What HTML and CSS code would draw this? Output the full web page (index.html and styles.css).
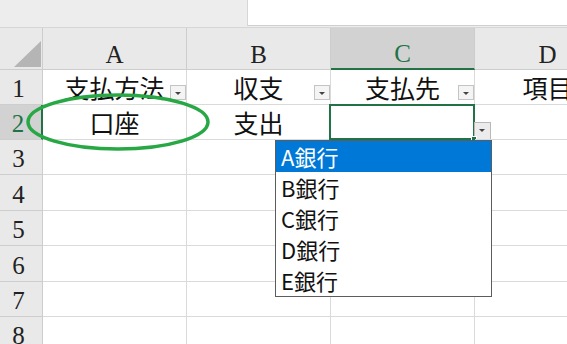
FILE: index.html
```html
<!DOCTYPE html>
<html lang="ja">

<head>
    <meta charset="UTF-8" />
    <title>支払先リスト</title>
    <link rel="stylesheet" href="styles.css">
</head>

<body>
    <div class="topbar">
        <div class="topbar-left"></div>
        <div class="formula-box"></div>
    </div>

    <div class="sheet">
        <div class="grid">
            <div class="corner">
                <svg width="42" height="42" viewBox="0 0 42 42">
                    <polygon points="41,13 41,39 14,39" fill="#b5b5b5" />
                </svg>
            </div>
            <div class="col-head">A</div>
            <div class="col-head">B</div>
            <div class="col-head is-active">C</div>
            <div class="col-head">D</div>

            <div class="row-head">1</div>
            <div class="cell">支払方法<span class="filter-btn"></span></div>
            <div class="cell">収支<span class="filter-btn"></span></div>
            <div class="cell">支払先<span class="filter-btn"></span></div>
            <div class="cell">項目</div>

            <div class="row-head is-active">2</div>
            <div class="cell">口座</div>
            <div class="cell">支出</div>
            <div class="cell is-selected">
                <span class="list-btn"></span>
                <span class="fill-handle"></span>
            </div>
            <div class="cell"></div>

            <div class="row-head">3</div>
            <div class="cell"></div>
            <div class="cell"></div>
            <div class="cell"></div>
            <div class="cell"></div>

            <div class="row-head">4</div>
            <div class="cell"></div>
            <div class="cell"></div>
            <div class="cell"></div>
            <div class="cell"></div>

            <div class="row-head">5</div>
            <div class="cell"></div>
            <div class="cell"></div>
            <div class="cell"></div>
            <div class="cell"></div>

            <div class="row-head">6</div>
            <div class="cell"></div>
            <div class="cell"></div>
            <div class="cell"></div>
            <div class="cell"></div>

            <div class="row-head">7</div>
            <div class="cell"></div>
            <div class="cell"></div>
            <div class="cell"></div>
            <div class="cell"></div>

            <div class="row-head">8</div>
            <div class="cell"></div>
            <div class="cell"></div>
            <div class="cell"></div>
            <div class="cell"></div>
        </div>

        <!-- 手書きの丸囲み -->
        <svg class="mark" width="186" height="62" viewBox="0 0 186 62">
            <ellipse cx="93" cy="29" rx="90" ry="27" fill="none" stroke="#27a844" stroke-width="3.5" />
        </svg>

        <ul class="dropdown">
            <li class="is-hover">A銀行</li>
            <li>B銀行</li>
            <li>C銀行</li>
            <li>D銀行</li>
            <li>E銀行</li>
        </ul>
    </div>
</body>

</html>
```

FILE: styles.css
```css
body {
    margin: 0;
    width: 567px;
    height: 344px;
    overflow: hidden;
    background-color: #ffffff;
    font-family: "Noto Sans CJK JP", sans-serif;
}

.topbar {
    display: flex;
    height: 27px;
    background-color: #ededed;
    border-bottom: 1px solid #d6d6d6;
}

.topbar-left {
    width: 247px;
}

.formula-box {
    flex: 1;
    background-color: #ffffff;
    border-left: 1px solid #d6d6d6;
    border-bottom: 1px solid #cfcfcf;
    margin-bottom: 1px;
}

.sheet {
    position: relative;
}

.grid {
    display: grid;
    grid-template-columns: 43px 144px 144px 144px 146px;
    grid-template-rows: 42px 35px 35px 35px 36px 35px 36px 35px 35px;
    width: 621px;
}

.grid > div {
    box-sizing: border-box;
    border-right: 1px solid #dadada;
    border-bottom: 1px solid #dadada;
}

.corner {
    background-color: #e9e9e9;
}

.corner svg {
    display: block;
}

.col-head,
.row-head {
    display: flex;
    justify-content: center;
    align-items: flex-end;
    background-color: #e9e9e9;
    color: #222;
    font-family: "Liberation Serif", serif;
    font-size: 25px;
    line-height: 25px;
    padding-bottom: 2px;
}

.grid > .col-head,
.grid > .row-head,
.grid > .corner {
    border-color: #cdcdcd;
}

.row-head {
    padding-right: 5px;
    padding-bottom: 3px;
}

.col-head.is-active {
    background-color: #d2d2d2;
    color: #217346;
    border-bottom: 2px solid #217346;
}

.row-head.is-active {
    background-color: #d2d2d2;
    color: #217346;
}

.grid > .row-head.is-active {
    border-right: 2px solid #217346;
}

.cell {
    position: relative;
    display: flex;
    justify-content: center;
    align-items: center;
    font-size: 25px;
    color: #111;
    white-space: nowrap;
}

.filter-btn {
    position: absolute;
    right: 0;
    bottom: 4px;
    width: 16px;
    height: 15px;
    box-sizing: border-box;
    background-color: #f4f4f4;
    border: 1px solid #c4c4c4;
}

.filter-btn::after,
.list-btn::after {
    content: "";
    position: absolute;
    left: 4px;
    top: 6px;
    border-left: 3px solid transparent;
    border-right: 3px solid transparent;
    border-top: 3px solid #444;
}

.cell.is-selected::before {
    content: "";
    position: absolute;
    top: -1px;
    left: -2px;
    right: -1px;
    bottom: -1px;
    border: 2px solid #217346;
}

.list-btn {
    position: absolute;
    left: 100%;
    bottom: -1px;
    width: 17px;
    height: 18px;
    box-sizing: border-box;
    background-color: #ececec;
    border: 1px solid #b9b9b9;
}

.fill-handle {
    position: absolute;
    right: -3px;
    bottom: -3px;
    width: 4px;
    height: 4px;
    background-color: #217346;
    border: 1px solid #ffffff;
}

.mark {
    position: absolute;
    left: 25px;
    top: 65px;
}

.dropdown {
    position: absolute;
    left: 275px;
    top: 112px;
    width: 217px;
    margin: 0;
    padding: 0;
    list-style: none;
    box-sizing: border-box;
    background-color: #ffffff;
    border: 1px solid #5c5c5c;
}

.dropdown li {
    height: 31px;
    line-height: 31px;
    padding-left: 5px;
    font-size: 22px;
    color: #111;
}

.dropdown li.is-hover {
    background-color: #0078d7;
    color: #ffffff;
}
```
